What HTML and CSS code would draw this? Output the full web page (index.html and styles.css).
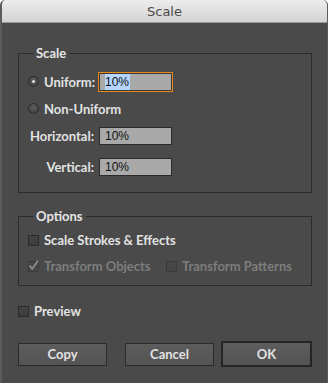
FILE: index.html
```html
<!DOCTYPE html>
<html lang="en">
<head>
    <meta charset="UTF-8">
    <meta name="viewport" content="width=device-width, initial-scale=1.0">
    <title>Scale</title>
    <link rel="stylesheet" href="styles.css">
</head>
<body>
    <div class="window">
        <div class="titlebar">Scale</div>

        <div class="content">
            <fieldset class="group group-scale">
                <legend>Scale</legend>

                <div class="row row-uniform">
                    <div class="lead">
                        <span class="radio checked"></span>
                        <span class="label">Uniform:</span>
                    </div>
                    <span class="field focused"><span class="sel">10%</span></span>
                </div>

                <div class="row row-nonuniform">
                    <span class="radio"></span>
                    <span class="label">Non-Uniform</span>
                </div>

                <div class="row row-horizontal">
                    <span class="label dim-label">Horizontal:</span>
                    <span class="field">10%</span>
                </div>

                <div class="row row-vertical">
                    <span class="label dim-label">Vertical:</span>
                    <span class="field">10%</span>
                </div>
            </fieldset>

            <fieldset class="group group-options">
                <legend>Options</legend>

                <div class="row check-row">
                    <span class="checkbox"></span>
                    <span class="label">Scale Strokes &amp; Effects</span>
                </div>

                <div class="row check-row transform-row">
                    <div class="check-item disabled">
                        <span class="checkbox checked">
                            <svg width="11" height="11" viewBox="0 0 11 11">
                                <path d="M1.5 5.5 L4.2 8.8 L10 0.8" fill="none" stroke="#8a8a8a" stroke-width="1.8"/>
                            </svg>
                        </span>
                        <span class="label">Transform Objects</span>
                    </div>
                    <div class="check-item disabled">
                        <span class="checkbox"></span>
                        <span class="label">Transform Patterns</span>
                    </div>
                </div>
            </fieldset>

            <div class="row preview-row">
                <span class="checkbox"></span>
                <span class="label">Preview</span>
            </div>

            <div class="buttons">
                <button class="btn btn-copy">Copy</button>
                <button class="btn btn-cancel">Cancel</button>
                <button class="btn btn-ok">OK</button>
            </div>
        </div>
    </div>
</body>
</html>
```

FILE: styles.css
```css
html {
    background-color: #ffffff;
}

body {
    margin: 0;
    width: 328px;
    height: 383px;
    font-family: Lato, "Open Sans", sans-serif;
    overflow: hidden;
}

.window {
    height: 383px;
    background-color: #4a4a4a;
    border-radius: 5px 5px 0 0;
    border-left: 2px solid #5b5b5b;
    border-right: 1px solid #5b5b5b;
    box-sizing: border-box;
    overflow: hidden;
}

.titlebar {
    height: 23px;
    line-height: 24px;
    text-align: center;
    font-family: "DejaVu Sans", sans-serif;
    font-size: 13px;
    color: #4a4a4a;
    background: linear-gradient(#ececec, #d3d3d3);
    border-bottom: 1px solid #9a9a9a;
    box-sizing: border-box;
}

.content {
    padding: 0 15px 0 16px;
}

.group {
    margin: 23px 0 0 0;
    padding: 11px 0 16px 9px;
    border: 1px solid #2c2c2c;
    min-width: 0;
}

.group legend {
    margin-left: 5px;
    padding: 0 3px;
    line-height: 14px;
    font-size: 13px;
    font-weight: 700;
    color: #e6e6e6;
}

.group-options {
    margin-top: 16px;
    padding: 9px 0 11px 9px;
}

.row {
    display: flex;
    align-items: center;
}

.label {
    font-size: 13px;
    font-weight: 700;
    color: #e2e2e2;
    white-space: nowrap;
}

.lead {
    display: flex;
    align-items: center;
    width: 66px;
    margin-right: 5px;
}

.row-uniform {
    height: 21px;
}

.row-nonuniform {
    height: 21px;
    margin-top: 6px;
}

.row-horizontal {
    height: 18px;
    margin-top: 8px;
}

.row-vertical {
    height: 18px;
    margin-top: 13px;
}

.dim-label {
    width: 66px;
    margin-right: 5px;
    text-align: right;
}

.radio {
    width: 11px;
    height: 11px;
    border-radius: 50%;
    border: 1px solid #2a2a2a;
    background: radial-gradient(circle at 50% 35%, #5e5e5e, #3c3c3c);
    box-sizing: border-box;
    margin-right: 5px;
    display: flex;
    align-items: center;
    justify-content: center;
    flex-shrink: 0;
}

.radio.checked::after {
    content: "";
    width: 3px;
    height: 3px;
    border-radius: 50%;
    background-color: #dcdcdc;
}

.field {
    width: 73px;
    height: 18px;
    box-sizing: border-box;
    border: 1px solid #2b2b2b;
    background-color: #a9a9a9;
    font-family: "Liberation Sans", sans-serif;
    font-size: 12px;
    line-height: 16px;
    color: #111111;
    padding-left: 5px;
}

.field.focused {
    outline: 1px solid #e8891c;
    outline-offset: 0;
    border-color: #3a3a3a;
}

.sel {
    background-color: #b4d5fe;
    padding: 1px 1px 1px 0;
}

.checkbox {
    width: 11px;
    height: 11px;
    border: 1px solid #2a2a2a;
    background: linear-gradient(#444444, #3c3c3c);
    box-sizing: border-box;
    margin-right: 5px;
    flex-shrink: 0;
    position: relative;
}

.checkbox svg {
    position: absolute;
    left: -1px;
    top: -2px;
}

.check-row {
    height: 16px;
}

.transform-row {
    margin-top: 10px;
}

.check-item {
    display: flex;
    align-items: center;
}

.check-item:first-child {
    width: 138px;
}

.disabled .label {
    color: #7d7d7d;
}

.disabled .checkbox {
    border-color: #3a3a3a;
    background: #474747;
}

.preview-row {
    height: 16px;
    margin-top: 17px;
}

.buttons {
    display: flex;
    align-items: center;
    height: 26px;
    margin-top: 22px;
}

.btn {
    height: 23px;
    width: 89px;
    border: 1px solid #2b2b2b;
    background: linear-gradient(#5d5d5d, #535353);
    color: #e2e2e2;
    font-family: Lato, "Open Sans", sans-serif;
    font-size: 13px;
    font-weight: 700;
    padding: 0;
}

.btn-cancel {
    margin-left: 18px;
}

.btn-ok {
    width: 91px;
    height: 26px;
    margin-left: 7px;
    border: 2px solid #252525;
}
```
